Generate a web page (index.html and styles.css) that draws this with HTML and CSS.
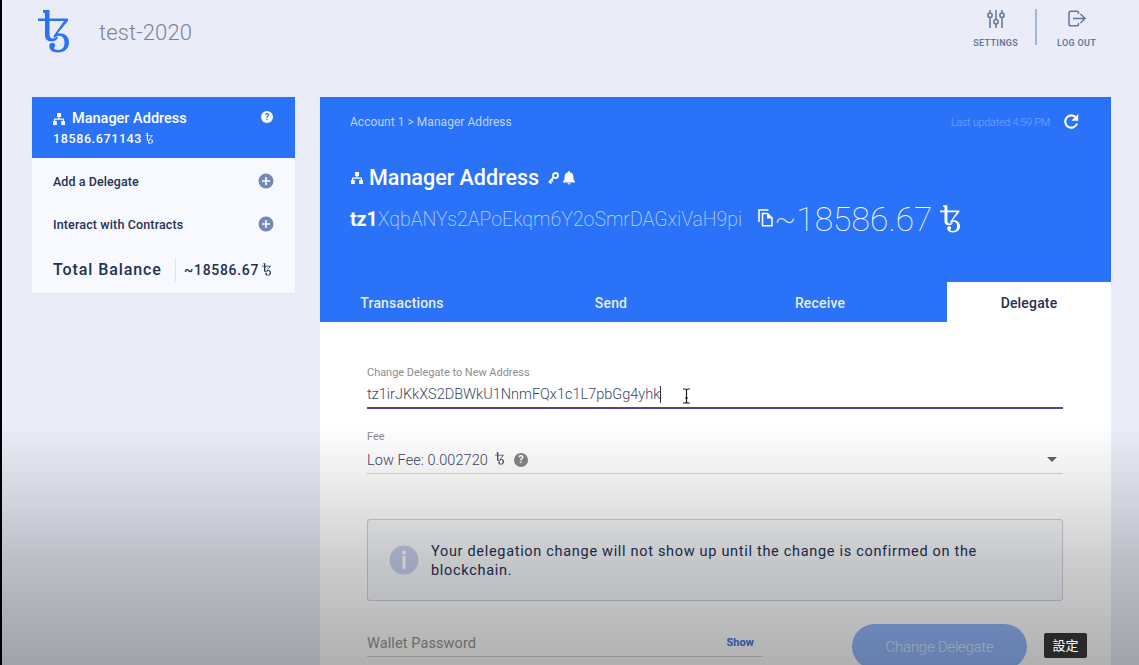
FILE: index.html
```
<!DOCTYPE html>
<html lang="en">

<head>
    <meta charset="UTF-8">
    <title>Wallet - test-2020</title>
    <meta name="viewport" content="width=device-width, initial-scale=1.0">
    <link rel="stylesheet" href="styles.css">
</head>

<body>

    <!-- Shared icons -->
    <svg class="defs" width="0" height="0">
        <symbol id="tez" viewBox="0 0 31 43">
            <path d="M5 0h6.500v24c0 3 1.200 4.500 3.500 4.500 1.500 0 2.700-.7 3.500-2l1.500 1.200c-1.300 2.500-3.500 3.600-6.500 3.600C9 31.300 7 29 7 25V3.500L5 2.500z" fill="currentColor"/>
            <path d="M0 8.500h30v2.200L19.500 23.500C26.500 22.500 31 26.500 31 32.500 31 38.500 26.500 42.500 20 42.500c-5.500 0-8.800-2.800-8.800-6.500 0-2 1.200-3.300 3-3.300s3 1.200 3 2.900c0 1.200-.6 2-1.500 2.500.8 1.200 2.300 1.900 4.300 1.900 4 0 6.500-2.600 6.500-7.300 0-4.600-2.300-6.900-5.500-6.900-1.700 0-3.200.7-4.500 2l-1.300-1.200L26 10.900H0z" fill="currentColor"/>
        </symbol>
        <symbol id="tree" viewBox="0 0 12 12">
            <path d="M4 0h4v4H4zM0 8h3.800v4H0zM8.200 8H12v4H8.200zM5.400 4h1.200v1.500H11V8H9.800V6.700H2.200V8H1V5.500h4.400z" fill="currentColor"/>
        </symbol>
        <symbol id="plus" viewBox="0 0 16 16">
            <circle cx="8" cy="8" r="7.500" fill="currentColor"/>
            <path d="M8 4v8M4 8h8" stroke="#fff" stroke-width="1.600"/>
        </symbol>
    </svg>

    <header>
        <svg class="logo"><use href="#tez"/></svg>
        <span class="wallet-name">test-2020</span>
        <nav>
            <a class="nav-item settings">
                <svg width="18" height="18" viewBox="0 0 18 18" fill="none" stroke="currentColor" stroke-width="1.500">
                    <path d="M3 0v3M3 7.500V18M9 0v9.500M9 14v4M15 0v3M15 7.500V18"/>
                    <circle cx="3" cy="5.200" r="2.200"/>
                    <circle cx="9" cy="11.800" r="2.200"/>
                    <circle cx="15" cy="5.200" r="2.200"/>
                </svg>
                SETTINGS
            </a>
            <a class="nav-item logout">
                <svg width="18" height="18" viewBox="0 0 18 18" fill="none" stroke="currentColor" stroke-width="1.500">
                    <path d="M10.500 4V3q0-1.800-1.800-1.800H2.800Q1 1.200 1 3v11q0 1.800 1.800 1.800h5.900q1.800 0 1.800-1.800v-1M5 8.500h12M12.500 4l4.500 4.500-4.500 4.500"/>
                </svg>
                LOG OUT
            </a>
        </nav>
    </header>

    <main>
        <aside>
            <div class="account">
                <div class="account-name">
                    <svg class="tree"><use href="#tree"/></svg>
                    Manager Address
                    <span class="help">?</span>
                </div>
                <div class="account-balance">18586.671143 <svg class="tez"><use href="#tez"/></svg></div>
            </div>
            <div class="side-row">Add a Delegate <svg class="plus"><use href="#plus"/></svg></div>
            <div class="side-row contracts">Interact with Contracts <svg class="plus"><use href="#plus"/></svg></div>
            <div class="total">
                <span class="total-label">Total Balance</span>
                <span class="total-value">~18586.67 <svg class="tez"><use href="#tez"/></svg></span>
            </div>
        </aside>

        <section class="panel">
            <div class="panel-head">
                <div class="crumbs">
                    <span>Account 1 &gt; Manager Address</span>
                    <span class="updated">Last updated 4:59 PM</span>
                    <svg class="refresh" width="16" height="16" viewBox="0 0 16 16">
                        <path d="M13 3.600A6.100 6.100 0 1 0 14.100 9.500" fill="none" stroke="#fff" stroke-width="2.100"/>
                        <path d="M15.200 0v6.800H8.400z" fill="#fff"/>
                    </svg>
                </div>
                <h1>
                    <svg class="tree"><use href="#tree"/></svg>
                    <span>Manager Address</span>
                    <svg class="key" width="11" height="12" viewBox="0 0 11 12" fill="none" stroke="#fff">
                        <circle cx="7.500" cy="3.500" r="2.500" stroke-width="1.800"/>
                        <path d="M5.700 5.300L.800 10.500M1.500 9.500l2 2M3.300 7.800l1.500 1.500" stroke-width="1.800"/>
                    </svg>
                    <svg class="bell" width="12" height="14" viewBox="0 0 12 14">
                        <path d="M6 0q1 0 1 1.200c2.500.6 3.400 2.500 3.400 5 0 2.300.6 3.200 1.600 4.300v1H0v-1c1-1.100 1.600-2 1.600-4.300 0-2.500.9-4.400 3.400-5Q5 0 6 0zM4.500 12.200h3Q7.300 13.600 6 13.600t-1.500-1.400z" fill="#fff"/>
                    </svg>
                </h1>
                <div class="address-row">
                    <b>tz1</b><span class="address">XqbANYs2APoEkqm6Y2oSmrDAGxiVaH9pi</span>
                    <svg class="copy" width="15" height="18" viewBox="0 0 15 18" fill="none" stroke="#fff" stroke-width="1.600">
                        <path d="M1 13V1h9.500M4.500 4.500h5L14 9v7.800H4.500z"/>
                        <path d="M9 4.500V9.500h5z" fill="#fff" stroke="none"/>
                    </svg>
                    <span class="tilde">~</span><span class="amount">18586.67</span>
                    <svg class="tez"><use href="#tez"/></svg>
                </div>
                <div class="tabs">
                    <div class="tab">Transactions</div>
                    <div class="tab">Send</div>
                    <div class="tab">Receive</div>
                    <div class="tab active">Delegate</div>
                </div>
            </div>

            <div class="panel-body">
                <label>Change Delegate to New Address</label>
                <div class="field focused">
                    <span class="new-address">tz1irJKkXS2DBWkU1NnmFQx1c1L7pbGg4yhk</span><span class="caret"></span>
                    <svg class="ibeam" width="9" height="16" viewBox="0 0 9 16" fill="none" stroke="#222" stroke-width="1.200">
                        <path d="M1 1h2q1.500 0 1.500 1.500v11Q4.500 15 3 15H1M8 1H6Q4.500 1 4.500 2.500M8 15H6q-1.500 0-1.500-1.500M3 10h3"/>
                    </svg>
                </div>
                <label class="fee-label">Fee</label>
                <div class="field fee">
                    <span>Low Fee: 0.002720</span>
                    <svg class="tez"><use href="#tez"/></svg>
                    <span class="help">?</span>
                    <span class="arrow"></span>
                </div>
                <div class="notice">
                    <svg width="30" height="30" viewBox="0 0 30 30">
                        <circle cx="15" cy="15" r="14.500" fill="#c6d0ec"/>
                        <path d="M15 12v11" stroke="#fff" stroke-width="3" stroke-linecap="round"/>
                        <circle cx="15" cy="7.500" r="1.900" fill="#fff"/>
                    </svg>
                    <p>Your delegation change will not show up until the change is confirmed on the blockchain.</p>
                </div>
                <div class="confirm">
                    <div class="password"><span>Wallet Password</span><a>Show</a></div>
                    <button>Change Delegate</button>
                </div>
            </div>
        </section>
    </main>

    <div class="scrim"></div>
    <div class="tooltip">設定</div>

</body>
</html>
```
FILE: styles.css
```
* {
    box-sizing: border-box;
    margin: 0;
    padding: 0;
}

body {
    height: 665px;
    overflow: hidden;
    border-left: 2px solid #000;
    background: #eaedf7;
    color: #1f3154;
    font-family: Roboto, "Liberation Sans", sans-serif;
}

svg {
    display: block;
    flex: none;
}

.defs {
    position: absolute;
}

header {
    display: flex;
    height: 97px;
    padding: 0 43px 0 36px;
}

.logo {
    width: 31px;
    height: 43px;
    margin-top: 10px;
    color: #2a72f8;
}

.wallet-name {
    margin: 19px 0 0 30px;
    font-size: 22px;
    line-height: 28px;
    font-weight: 300;
    letter-spacing: 0.15px;
    color: #7b8296;
}

nav {
    display: flex;
    margin: 9px 0 0 auto;
    height: 36px;
}

.nav-item {
    display: flex;
    flex-direction: column;
    align-items: center;
    gap: 9px;
    padding-top: 1px;
    font-size: 9px;
    line-height: 13px;
    font-weight: 600;
    letter-spacing: 0.3px;
    white-space: nowrap;
    color: #65769e;
}

.settings {
    padding-right: 17px;
    border-right: 2px solid #a5b6d3;
}

.logout {
    padding-left: 20px;
}

main {
    display: grid;
    grid-template-columns: 263px 791px;
    gap: 25px;
    align-items: start;
    padding-left: 30px;
}

/* Sidebar */
aside {
    height: 196px;
    background: #f7f9fe;
    box-shadow: 0 0 2px #dfe4f0;
}

.account {
    height: 61px;
    padding: 11px 22px 0 21px;
    background: #2a72f8;
    color: #fff;
}

.account-name {
    display: flex;
    align-items: center;
    gap: 7px;
    height: 21px;
    font-size: 14.5px;
    font-weight: 500;
}

.tree {
    width: 12px;
    height: 12px;
}

.help {
    width: 12px;
    height: 12px;
    border-radius: 50%;
    background: #fff;
    color: #2a72f8;
    font-size: 9px;
    line-height: 12px;
    font-weight: 700;
    letter-spacing: 0;
    text-align: center;
}

.account .help {
    margin: -3px 0 0 auto;
}

.account-balance {
    display: flex;
    align-items: center;
    gap: 3px;
    height: 19px;
    font-size: 12.5px;
    font-weight: 500;
    letter-spacing: 0.62px;
}

.account-balance .tez {
    width: 8px;
    height: 11px;
}

.side-row {
    display: flex;
    align-items: center;
    justify-content: space-between;
    height: 43px;
    padding: 3px 21px 0 21px;
    font-size: 12.5px;
    font-weight: 500;
    letter-spacing: 0.08px;
}

.contracts {
    letter-spacing: 0.14px;
}

.plus {
    width: 16px;
    height: 16px;
    color: #7288b9;
}

.total {
    display: flex;
    align-items: center;
    height: 49px;
    padding: 2px 21px 0;
    font-weight: 500;
}

.total-label {
    width: 123px;
    line-height: 24px;
    border-right: 1px solid #dfe3ee;
    font-size: 16px;
    letter-spacing: 0.9px;
}

.total-value {
    display: flex;
    align-items: center;
    gap: 3px;
    padding-left: 8px;
    font-size: 14px;
    letter-spacing: 0.7px;
}

.total-value .tez {
    width: 9px;
    height: 13px;
}

/* Account panel */
.panel {
    height: 600px;
    background: #fff;
}

.panel-head {
    display: flex;
    flex-direction: column;
    height: 225px;
    background: #2a72f8;
    color: #fff;
}

.crumbs {
    display: flex;
    align-items: center;
    height: 48px;
    padding: 2px 32px 0 30px;
    font-size: 12px;
    letter-spacing: 0.04px;
    color: #bdd4ff;
}

.updated {
    margin-left: auto;
    font-size: 11px;
    font-weight: 300;
    letter-spacing: -0.3px;
    color: #78a8ff;
}

.refresh {
    margin-left: 13px;
}

h1 {
    display: flex;
    align-items: center;
    height: 64px;
    padding-left: 31px;
    font-size: 21.5px;
    font-weight: 500;
}

h1 .tree {
    margin: 2px 6px 0 0;
}

h1 .key {
    margin: 2px 0 0 9px;
}

h1 .bell {
    margin: 1px 0 0 4px;
}

.address-row {
    display: flex;
    align-items: center;
    height: 20px;
    padding-left: 30px;
    font-size: 20px;
    font-weight: 300;
}

.address-row b {
    font-size: 19.5px;
    font-weight: 700;
}

.address {
    font-weight: 200;
    font-size: 19.5px;
    color: #bcd3ff;
}

.copy {
    margin: -3px 0 0 16px;
}

.tilde {
    margin: 0 0 0 1px;
    font-size: 32px;
    font-weight: 200;
    color: #dce8ff;
}

.amount {
    font-size: 33.5px;
    font-weight: 100;
    letter-spacing: 0.1px;
}

.address-row .tez {
    width: 20px;
    height: 28px;
    margin-left: 7px;
}

.tabs {
    display: flex;
    justify-content: space-between;
    margin-top: auto;
}

.tab {
    width: 164px;
    height: 40px;
    line-height: 43px;
    text-align: center;
    font-size: 14px;
    font-weight: 500;
    letter-spacing: 0.17px;
    color: #e5eeff;
}

.tab.active {
    background: #fff;
    color: #1f3154;
}

/* Delegate form */
.panel-body {
    padding: 42px 48px 0 47px;
}

label {
    display: block;
    height: 17px;
    line-height: 18px;
    font-size: 11px;
    letter-spacing: -0.03px;
    color: #8d8d91;
}

.field {
    display: flex;
    align-items: center;
    height: 28px;
    padding-top: 1px;
    border-bottom: 1px solid #d5d5d7;
    font-size: 14.5px;
    font-weight: 300;
    color: #3d4666;
}

.focused {
    border-bottom: 2px solid #4c449a;
}

.caret {
    width: 1px;
    height: 17px;
    background: #333;
}

.ibeam {
    margin: 2px 0 0 21px;
}

.fee-label {
    margin-top: 19px;
}

.fee {
    height: 29px;
    padding: 2px 6px 0 0;
    letter-spacing: 0.08px;
}

.fee .tez {
    width: 9px;
    height: 13px;
    margin: -3px 0 0 7px;
}

.fee .help {
    width: 14px;
    height: 14px;
    margin-left: 10px;
    background: #858585;
    color: #fff;
    font-size: 11px;
    line-height: 14px;
}

.arrow {
    margin: -1px 0 0 auto;
    border: 5px solid transparent;
    border-top-color: #686868;
    border-bottom: 0;
}

.notice {
    display: flex;
    align-items: center;
    gap: 12px;
    height: 82px;
    margin-top: 45px;
    padding: 0 60px 0 21px;
    border: 1px solid #cbd2e4;
    border-radius: 3px;
    background: #f6f8fb;
}

.notice p {
    padding-top: 1px;
    font-size: 14.5px;
    line-height: 19px;
    letter-spacing: 0.69px;
}

.confirm {
    display: flex;
    justify-content: space-between;
    padding: 23px 36px 0 0;
}

.password {
    display: flex;
    align-items: center;
    justify-content: space-between;
    width: 396px;
    height: 33px;
    padding: 6px 9px 0 0;
    border-bottom: 1px solid #d5d5d7;
    font-size: 14.5px;
    letter-spacing: 0.1px;
    color: #969696;
}

.password a {
    margin-top: -2px;
    font-size: 11px;
    font-weight: 700;
    color: #3d75dd;
}

button {
    width: 175px;
    height: 45px;
    border: 0;
    border-radius: 23px;
    background: #93b8fb;
    color: #dce8fb;
    font: 300 15px Roboto, sans-serif;
    letter-spacing: -0.25px;
}

/* Shade over the bottom of the page */
.scrim {
    position: fixed;
    inset: 425px 0 0 2px;
    background: linear-gradient(rgba(0, 0, 0, 0), rgba(0, 0, 0, 0.1) 31%, rgba(0, 0, 0, 0.2) 58%, rgba(0, 0, 0, 0.31));
}

.tooltip {
    position: fixed;
    left: 1044px;
    top: 633px;
    width: 43px;
    height: 25px;
    border-radius: 2px;
    background: #292929;
    color: #fff;
    font: 13px/24px "Noto Sans CJK TC", sans-serif;
    text-align: center;
}
```
